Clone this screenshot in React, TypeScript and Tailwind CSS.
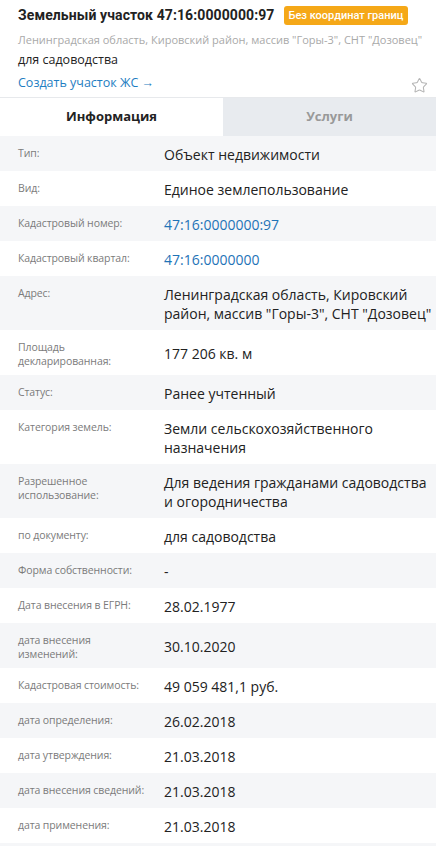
import { Star } from "lucide-react";

type Row = { label: string; value: string; link?: boolean };

const rows: Row[] = [
  { label: "Тип:", value: "Объект недвижимости" },
  { label: "Вид:", value: "Единое землепользование" },
  { label: "Кадастровый номер:", value: "47:16:0000000:97", link: true },
  { label: "Кадастровый квартал:", value: "47:16:0000000", link: true },
  {
    label: "Адрес:",
    value: 'Ленинградская область, Кировский район, массив "Горы-3", СНТ "Дозовец"',
  },
  { label: "Площадь декларированная:", value: "177 206 кв. м" },
  { label: "Статус:", value: "Ранее учтенный" },
  { label: "Категория земель:", value: "Земли сельскохозяйственного назначения" },
  {
    label: "Разрешенное использование:",
    value: "Для ведения гражданами садоводства и огородничества",
  },
  { label: "по документу:", value: "для садоводства" },
  { label: "Форма собственности:", value: "-" },
  { label: "Дата внесения в ЕГРН:", value: "28.02.1977" },
  { label: "дата внесения изменений:", value: "30.10.2020" },
  { label: "Кадастровая стоимость:", value: "49 059 481,1 руб." },
  { label: "дата определения:", value: "26.02.2018" },
  { label: "дата утверждения:", value: "21.03.2018" },
  { label: "дата внесения сведений:", value: "21.03.2018" },
  { label: "дата применения:", value: "21.03.2018" },
  { label: "", value: "" },
];

export default function App() {
  return (
    <div
      className="w-[436px] h-[846px] overflow-hidden bg-white text-[#222]"
      style={{ fontFamily: '"Open Sans", "Noto Sans", sans-serif' }}
    >
      <div className="px-[18px] pt-[5px]">
        <div className="flex items-center gap-[9px] h-[20px] whitespace-nowrap">
          <h1 className="text-[14px] font-bold font-['Roboto',sans-serif] tracking-[0.1px]">
            Земельный участок 47:16:0000000:97
          </h1>
          <span className="rounded-[3px] bg-[#f5a818] px-[5px] h-[19px] leading-[19px] text-[11px] font-medium font-['Roboto',sans-serif] text-white">
            Без координат границ
          </span>
        </div>
        <p className="mt-[7px] text-[11px] leading-[16px] text-[#a9a9a9] whitespace-nowrap">
          Ленинградская область, Кировский район, массив "Горы-3", СНТ "Дозовец"
        </p>
        <p className="mt-[3px] text-[12.5px] leading-[18px]">для садоводства</p>
        <div className="mt-[4px] flex items-center justify-between h-[20px]">
          <a className="text-[12.5px] text-[#1f7ec2]">Создать участок ЖС →</a>
          <Star className="mr-[-10px] mt-[4px] h-[17px] w-[17px] text-[#b5b5b5]" strokeWidth={1.5} />
        </div>
      </div>

      <div className="mt-[4px] flex h-[39px] border-t border-[#e7e9ec]">
        <div className="flex w-[223px] items-center justify-center text-[13px] font-bold">
          Информация
        </div>
        <div className="flex flex-1 items-center justify-center bg-[#e8ebef] text-[13px] font-bold text-[#999]">
          Услуги
        </div>
      </div>

      <div>
        {rows.map((r, i) => (
          <div
            key={i}
            className={`flex pl-[18px] pr-[4px] pt-[9px] pb-[7px] ${
              i % 2 === 0 ? "bg-[#f5f6f8]" : "bg-white"
            }`}
          >
            <div className="w-[146px] shrink-0 self-start pt-[1px] pr-[14px] text-[10.5px] leading-[14px] tracking-[-0.1px] text-[#7b7b7b]">
              {r.label}
            </div>
            <div
              className={`self-center text-[14px] leading-[19px] ${
                r.link ? "text-[#1f73b7]" : "text-[#222]"
              }`}
            >
              {r.value}
            </div>
          </div>
        ))}
      </div>
    </div>
  );
}
